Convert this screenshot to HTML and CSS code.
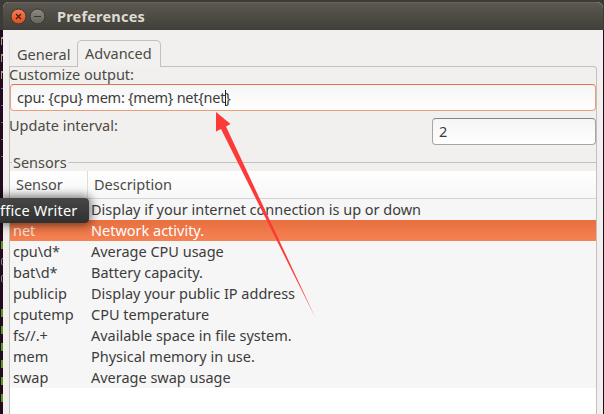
FILE: index.html
```html
<!DOCTYPE html>
<html lang="en">
<head>
<meta charset="utf-8">
<title>Preferences</title>
<link rel="stylesheet" href="styles.css">
</head>
<body>
<div class="desktop">
  <svg class="terminal" width="3" height="414" viewBox="0 0 3 414">
    <g fill="#ad9583"><path d="M1 37h2v2H2v6H1zM1 54h2v2H2v6H1zM1 71h2v2H2v6H1z"/></g>
    <g fill="#6264a5"><path d="M1 88h2v1H1zM1 105h2v1H1zM1 122h2v1H1zM1 139h2v1H1zM1 156h2v1H1z"/></g>
    <g fill="#57951e"><path d="M1 241h2v8H1zM1 309h2v8H1zM1 326h2v8H1zM1 343h2v8H1zM1 360h2v8H1zM1 377h2v8H1zM1 394h2v8H1z"/></g>
    <g fill="none" stroke="#8c7e88"><path d="M3 258.500H2L1.500 260v4L3 265.500M3 275.500H2L1.500 277v4L3 282.500"/></g>
  </svg>
  <main class="window">
    <header class="titlebar">
      <svg class="controls" width="36" height="18" viewBox="0 0 36 18">
        <defs>
          <linearGradient id="close" x2="0" y2="1"><stop stop-color="#f58059"/><stop offset="1" stop-color="#df4b1b"/></linearGradient>
          <linearGradient id="min" x2="0" y2="1"><stop stop-color="#8c8a82"/><stop offset="1" stop-color="#65635d"/></linearGradient>
        </defs>
        <circle cx="8.500" cy="8.500" r="7.500" fill="url(#close)" stroke="#39352e"/>
        <path d="M6 6l5 5M11 6l-5 5" stroke="#4a2013" stroke-width="1.300"/>
        <circle cx="27.500" cy="8.500" r="7.500" fill="url(#min)" stroke="#383731"/>
        <path d="M24 8.500h7" stroke="#383731"/>
      </svg>
      <h1 class="title">Preferences</h1>
    </header>
    <nav class="tabs">
      <span class="tab tab-general">General</span>
      <span class="tab tab-active">Advanced</span>
    </nav>
    <section class="page">
      <label class="field-label" for="output">Customize output:</label>
      <div class="entry entry-focus" id="output">cpu: {cpu} mem: {mem} net{net<i class="caret"></i>}</div>
      <div class="interval">
        <span class="interval-label">Update interval:</span>
        <div class="entry spin">2</div>
      </div>
      <div class="legend">Sensors</div>
      <div class="table">
        <div class="head"><span class="name">Sensor</span><span class="desc">Description</span></div>
        <div class="row"><span class="name"></span><span class="desc">Display if your internet connection is up or down</span></div>
        <div class="row selected"><span class="name">net</span><span class="desc">Network activity.</span></div>
        <div class="row"><span class="name">cpu\d*</span><span class="desc">Average CPU usage</span></div>
        <div class="row"><span class="name">bat\d*</span><span class="desc">Battery capacity.</span></div>
        <div class="row"><span class="name">publicip</span><span class="desc">Display your public IP address</span></div>
        <div class="row"><span class="name">cputemp</span><span class="desc">CPU temperature</span></div>
        <div class="row"><span class="name">fs//.+</span><span class="desc">Available space in file system.</span></div>
        <div class="row"><span class="name">mem</span><span class="desc">Physical memory in use.</span></div>
        <div class="row"><span class="name">swap</span><span class="desc">Average swap usage</span></div>
      </div>
    </section>
  </main>
  <div class="tooltip">ffice Writer</div>
  <svg class="arrow" width="104" height="210" viewBox="0 0 104 210">
    <path d="M4 0L18.500 12L14 14.500L103.500 206L9 17L4 19.500Z" fill="#fc3a37"/>
  </svg>
</div>
</body>
</html>
```
FILE: styles.css
```css
* { box-sizing: border-box; }
body { margin: 0; overflow: hidden; }
.desktop {
  position: relative;
  display: flex;
  width: 604px;
  height: 414px;
  padding-top: 2px;
  overflow: hidden;
  background: linear-gradient(#3c3b37 0 30px, #230a1e 30px);
  font: 14.5px/21px "Noto Sans", sans-serif;
  letter-spacing: -0.01px;
  color: #4c4a46;
  white-space: nowrap;
}
.terminal { flex: none; margin-top: -2px; }
.window {
  display: flex;
  flex-direction: column;
  width: 600px;
  height: 412px;
  background: #f1f0ee;
  border-radius: 6px 6px 0 0;
  overflow: hidden;
}
.titlebar {
  display: flex;
  align-items: center;
  flex: none;
  height: 28px;
  padding-left: 7px;
  background: linear-gradient(#5a584f, #403f3a);
  border-top: 1px solid #66645a;
}
.title {
  margin: 0 0 0 11px;
  font-size: 14.5px;
  font-weight: 700;
  letter-spacing: 0.2px;
  color: #dfdbd2;
}
.tabs { display: flex; align-items: flex-end; height: 37px; padding-left: 6px; }
.tab { height: 27px; line-height: 28px; }
.tab-general { width: 68px; padding-left: 7px; border-left: 1px solid #e5e3e0; }
.tab-active {
  z-index: 1;
  width: 84px;
  padding-left: 7px;
  line-height: 25px;
  background: #f2f1f0;
  border: 1px solid #c3c1be;
  border-bottom: 0;
  border-radius: 5px 5px 0 0;
}
.page {
  display: flex;
  flex-direction: column;
  flex: 1;
  width: 588px;
  margin: -1px 0 0 6px;
  border: solid #c3c1be;
  border-width: 1px 1px 0;
  border-radius: 0 4px 0 0;
}
.field-label { height: 17px; margin-left: -1px; line-height: 15px; }
.entry {
  height: 27px;
  padding-left: 6px;
  line-height: 25px;
  background: linear-gradient(#f5f5f5, #fff);
  border: 1px solid #a6a5a2;
  border-top-color: #878684;
  border-radius: 4px;
  color: #3c3c3c;
}
.entry-focus { border-color: #ee9c7c; border-top-color: #dc7650; letter-spacing: -0.25px; }
.caret { display: inline-block; width: 1px; height: 16px; margin-right: -1px; vertical-align: -3px; background: #222; }
.interval { display: flex; justify-content: space-between; height: 34px; padding-top: 7px; }
.interval-label { margin-left: -1px; line-height: 15px; }
.spin { width: 164px; }
.legend { display: flex; align-items: center; gap: 1px; height: 17px; margin-top: 9px; line-height: 17px; }
.legend::before, .legend::after { content: ""; width: 2px; height: 1px; background: #c3c1be; }
.legend::after { flex: 1; }
.table { flex: 1; background: #fff; }
.head, .row { display: flex; }
.head { height: 28px; line-height: 27px; background: linear-gradient(#fff, #f7f7f7); border-bottom: 1px solid #d6d5d3; }
.head .name { padding-left: 6px; border-right: 1px solid #deddda; }
.head .desc { padding-left: 6px; }
.row { height: 21px; background: #f6f6f6; color: #3c3c3c; }
.name { width: 78px; padding-left: 3px; }
.desc { padding-left: 3px; }
.selected { background: linear-gradient(#e86f3e, #f58254); color: #fff; }
.selected .name { color: #fbe1d5; }
.tooltip {
  position: absolute;
  left: 0;
  top: 198px;
  width: 89px;
  height: 25px;
  line-height: 25px;
  letter-spacing: 0.2px;
  color: #fff;
  background: linear-gradient(#464646, #303030);
  border-radius: 0 4px 4px 0;
  box-shadow: 0 0 10px 2px #0008;
}
.arrow { position: absolute; left: 212px; top: 112px; }
```
